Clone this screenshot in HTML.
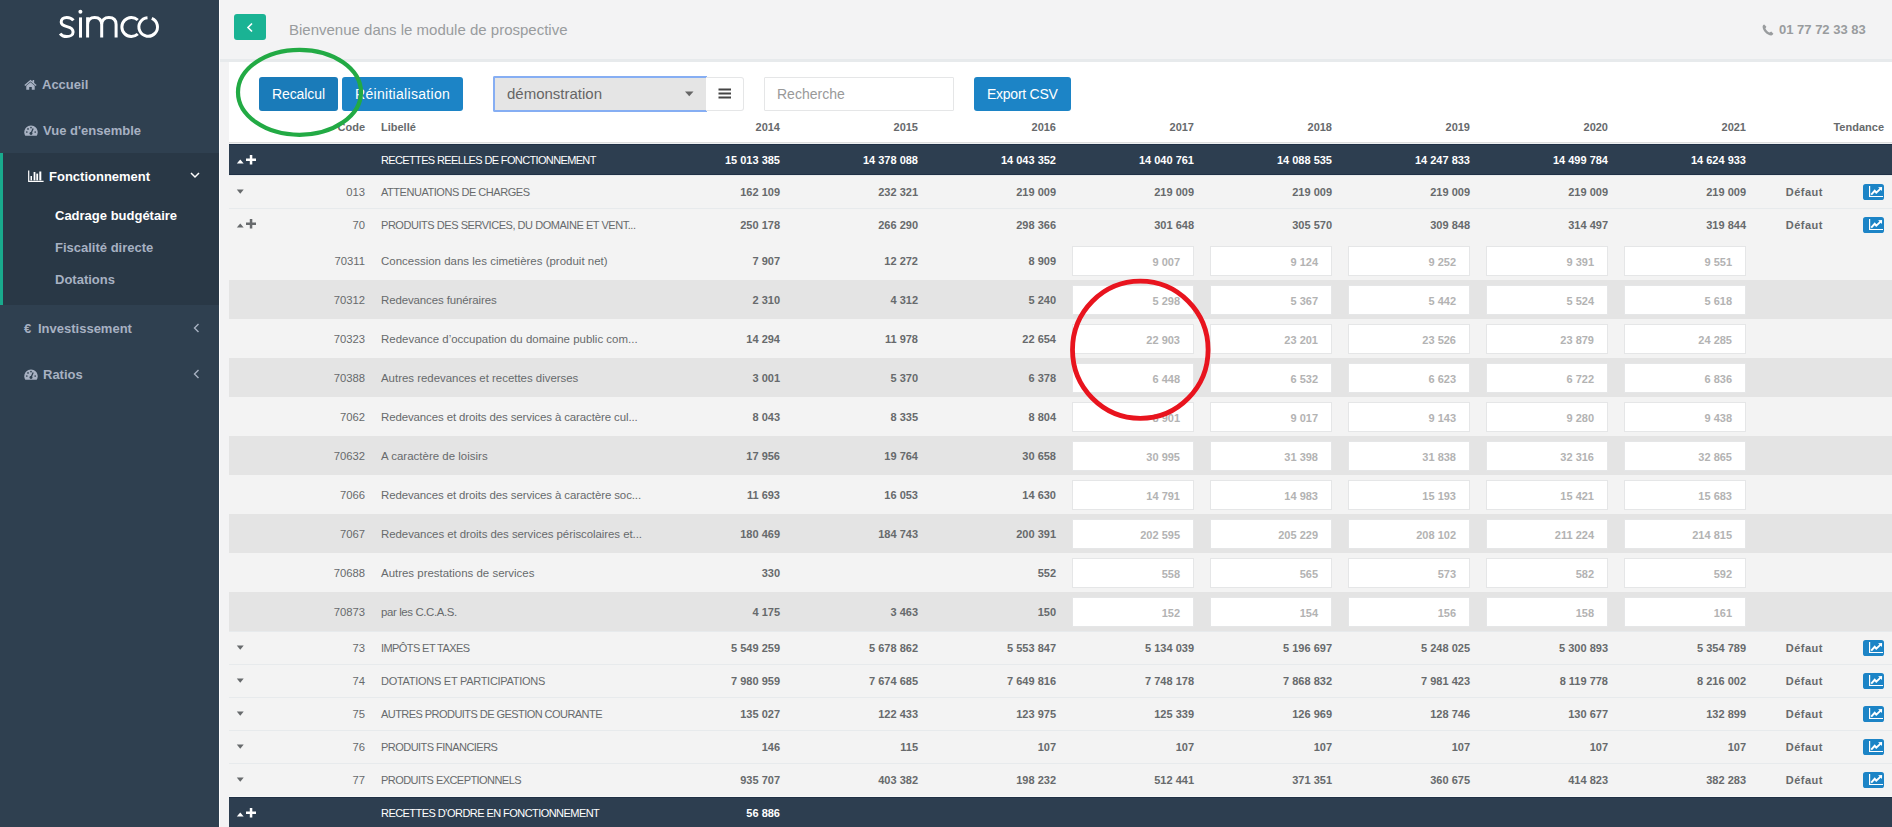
<!DOCTYPE html>
<html><head><meta charset="utf-8"><title>simco</title>
<style>
*{margin:0;padding:0;box-sizing:border-box}
html,body{width:1892px;height:827px;overflow:hidden;background:#f3f3f4;font-family:"Liberation Sans", sans-serif;}
.abs{position:absolute}
.t{position:absolute;white-space:nowrap;line-height:1}
.row{position:absolute;left:229px;width:1663px}
.inp{position:absolute;width:122px;background:#fff;border:1px solid #e5e6e7;}
</style></head><body>

<div class="abs" style="left:0;top:0;width:219px;height:827px;background:#2f4050"></div>
<div class="abs" style="left:219px;top:0;width:1px;height:827px;background:#ffffff"></div>
<div class="abs" style="left:0;top:153px;width:219px;height:152px;background:#293846"></div>
<div class="abs" style="left:0;top:153px;width:3px;height:152px;background:#19aa8d"></div>
<svg class="abs" style="left:0;top:0" width="219" height="50" viewBox="0 0 219 50">
<g stroke="#fff" stroke-width="3" fill="none" stroke-linecap="butt">
<path d="M73.4,20.4 C71.8,18.3 69.2,17.4 66.7,17.4 C63.3,17.4 61.2,19.2 61.2,21.9 C61.2,25 64,25.8 67,26.6 C70.6,27.5 73.1,28.7 73.1,31.9 C73.1,34.9 70.2,36.6 66.6,36.6 C63.6,36.6 61.5,35.5 60.1,33.6"/>
<path d="M80.5,17.4 V37.6"/>
<path d="M87.6,37.6 V17.2 M87.6,24.5 C87.6,19.8 90.5,17.4 94.6,17.4 C99,17.4 101.7,20 101.7,24.5 V37.6 M101.7,24.5 C101.7,20 104.6,17.4 108.9,17.4 C113.4,17.4 116.1,20 116.1,24.5 V37.6"/>
<path d="M137.8,20 A9.5,9.5 0 1 0 137.8,34"/>
<path d="M151.8,18.4 A9.3,9.3 0 1 1 147.5,17.7"/>
</g>
<circle cx="80.4" cy="11.8" r="2" fill="#fff"/>
</svg>
<svg class="abs" style="left:23.5px;top:79px" width="13" height="11" viewBox="0 0 14 12">
<path d="M7 0.8 L0.3 6.6 L1.3 7.6 L7 2.8 L12.7 7.6 L13.7 6.6 L11 4.3 V1 H9.3 V2.8 Z" fill="#a7b1c2"/>
<path d="M2.4 7.4 L7 3.6 L11.6 7.4 V11.6 H8.4 V8.6 H5.6 V11.6 H2.4 Z" fill="#a7b1c2"/>
</svg>
<div class="t" style="left:42px;top:78px;font-size:13px;color:#a7b1c2;font-weight:bold;">Accueil</div>
<svg class="abs" style="left:23.5px;top:125px" width="14" height="11.2" viewBox="0 0 15 12">
<path d="M7.5 0.5 C3.4 0.5 0.3 3.7 0.3 7.8 C0.3 9.3 0.7 10.5 1.4 11.5 H13.6 C14.3 10.5 14.7 9.3 14.7 7.8 C14.7 3.7 11.6 0.5 7.5 0.5 Z" fill="#a7b1c2"/>
<circle cx="7.5" cy="9" r="1.6" fill="#2f4050"/>
<path d="M7.5 9 L9.8 3.8" stroke="#2f4050" stroke-width="1.4"/>
<circle cx="3" cy="7.5" r="0.9" fill="#2f4050"/><circle cx="4.3" cy="4.2" r="0.9" fill="#2f4050"/><circle cx="7.5" cy="2.8" r="0.9" fill="#2f4050"/><circle cx="12" cy="7.5" r="0.9" fill="#2f4050"/>
</svg>
<div class="t" style="left:43px;top:124px;font-size:13px;color:#a7b1c2;font-weight:bold;">Vue d'ensemble</div>
<svg class="abs" style="left:27px;top:170px" width="17" height="13" viewBox="0 0 17 13">
<path d="M1.7 0.5 V11.4 H16.6" stroke="#fff" stroke-width="1.2" fill="none"/>
<rect x="3.5" y="6" width="1.5" height="4.4" fill="#fff"/><rect x="6.6" y="2" width="1.8" height="8.4" fill="#fff"/><rect x="9.3" y="3.6" width="1.8" height="6.8" fill="#fff"/><rect x="12.3" y="1.5" width="2" height="8.9" fill="#fff"/>
</svg>
<div class="t" style="left:49px;top:170px;font-size:13px;color:#fff;font-weight:bold;">Fonctionnement</div>
<svg class="abs" style="left:190px;top:172px" width="10" height="7"><path d="M1 1 L5 5 L9 1" stroke="#fff" stroke-width="1.5" fill="none"/></svg>
<div class="t" style="left:55px;top:209px;font-size:13px;color:#fff;font-weight:bold;">Cadrage budgétaire</div>
<div class="t" style="left:55px;top:241px;font-size:13px;color:#a7b1c2;font-weight:bold;">Fiscalité directe</div>
<div class="t" style="left:55px;top:273px;font-size:13px;color:#a7b1c2;font-weight:bold;">Dotations</div>
<div class="t" style="left:24px;top:322px;font-size:13px;color:#a7b1c2;font-weight:bold;">€</div>
<div class="t" style="left:38px;top:322px;font-size:13px;color:#a7b1c2;font-weight:bold;">Investissement</div>
<svg class="abs" style="left:193px;top:323px" width="7" height="10"><path d="M5.5 1 L1.5 5 L5.5 9" stroke="#a7b1c2" stroke-width="1.4" fill="none"/></svg>
<svg class="abs" style="left:23.5px;top:369px" width="14" height="11.2" viewBox="0 0 15 12">
<path d="M7.5 0.5 C3.4 0.5 0.3 3.7 0.3 7.8 C0.3 9.3 0.7 10.5 1.4 11.5 H13.6 C14.3 10.5 14.7 9.3 14.7 7.8 C14.7 3.7 11.6 0.5 7.5 0.5 Z" fill="#a7b1c2"/>
<circle cx="7.5" cy="9" r="1.6" fill="#2f4050"/>
<path d="M7.5 9 L9.8 3.8" stroke="#2f4050" stroke-width="1.4"/>
<circle cx="3" cy="7.5" r="0.9" fill="#2f4050"/><circle cx="4.3" cy="4.2" r="0.9" fill="#2f4050"/><circle cx="7.5" cy="2.8" r="0.9" fill="#2f4050"/><circle cx="12" cy="7.5" r="0.9" fill="#2f4050"/>
</svg>
<div class="t" style="left:43px;top:368px;font-size:13px;color:#a7b1c2;font-weight:bold;">Ratios</div>
<svg class="abs" style="left:193px;top:369px" width="7" height="10"><path d="M5.5 1 L1.5 5 L5.5 9" stroke="#a7b1c2" stroke-width="1.4" fill="none"/></svg>
<div class="abs" style="left:220px;top:59px;width:1672px;height:3px;background:#e7eaec"></div>
<div class="abs" style="left:234px;top:14px;width:32px;height:26px;background:#1ab394;border-radius:3px"></div>
<svg class="abs" style="left:246px;top:22px" width="8" height="11"><path d="M6 1.5 L2 5.5 L6 9.5" stroke="#fff" stroke-width="1.6" fill="none"/></svg>
<div class="t" style="left:289px;top:22px;font-size:15px;color:#999c9e;font-weight:normal;">Bienvenue dans le module de prospective</div>
<svg class="abs" style="left:1761.5px;top:23.5px" width="12" height="12" viewBox="0 0 12 12">
<path d="M2.2 0.6 C1.4 0.9 0.6 1.7 0.6 2.8 C0.6 6.8 5.2 11.4 9.2 11.4 C10.3 11.4 11.1 10.6 11.4 9.8 L9.2 7.6 L7.6 8.6 C6 7.8 4.2 6 3.4 4.4 L4.4 2.8 Z" fill="#999c9e"/>
</svg>
<div class="t" style="left:1779px;top:23px;font-size:13px;color:#999c9e;font-weight:bold;">01 77 72 33 83</div>
<div class="abs" style="left:229px;top:62px;width:1663px;height:80px;background:#fff"></div>
<div class="abs" style="left:229px;top:142px;width:1663px;height:1px;background:#dddddd"></div>
<div class="abs" style="left:229px;top:143px;width:1663px;height:1px;background:#eef0f2"></div>
<div class="abs" style="left:259px;top:77px;width:79px;height:34px;background:#1a7bb9;border-radius:3px"></div>
<div class="t" style="left:272px;top:87px;font-size:14px;color:#fff;font-weight:normal;letter-spacing:-0.1px;">Recalcul</div>
<div class="abs" style="left:342px;top:77px;width:121px;height:34px;background:#1c84c6;border-radius:3px"></div>
<div class="t" style="left:355px;top:87px;font-size:14px;color:#fff;font-weight:normal;letter-spacing:0.3px;">Réinitialisation</div>
<div class="abs" style="left:493px;top:76px;width:214px;height:36px;background:#e5e5e5;border:2px solid #86aef3;border-right:none;border-radius:2px 0 0 2px"></div>
<div class="t" style="left:507px;top:86px;font-size:15px;color:#666;font-weight:normal;">démonstration</div>
<svg class="abs" style="left:685px;top:91px" width="9" height="6"><path d="M0 0.5 H8.5 L4.25 5.2 Z" fill="#666"/></svg>
<div class="abs" style="left:706px;top:77px;width:38px;height:34px;background:#fff;border:1px solid #e5e6e7;border-left:none;border-radius:0 3px 3px 0"></div>
<svg class="abs" style="left:718px;top:88px" width="14" height="12"><rect x="0.5" y="0.5" width="12.5" height="2" fill="#444"/><rect x="0.5" y="4.5" width="12.5" height="2" fill="#444"/><rect x="0.5" y="8.5" width="12.5" height="2" fill="#444"/></svg>
<div class="abs" style="left:764px;top:77px;width:190px;height:34px;background:#fff;border:1px solid #e5e6e7;border-radius:1px"></div>
<div class="t" style="left:777px;top:87px;font-size:14px;color:#999;font-weight:normal;">Recherche</div>
<div class="abs" style="left:974px;top:77px;width:97px;height:34px;background:#1c84c6;border-radius:3px"></div>
<div class="t" style="left:987px;top:87px;font-size:14px;color:#fff;font-weight:normal;letter-spacing:-0.25px;">Export CSV</div>
<div class="t" style="right:1527px;top:122px;font-size:11px;color:#676a6c;font-weight:bold;text-align:right;">Code</div>
<div class="t" style="left:381px;top:122px;font-size:11px;color:#676a6c;font-weight:bold;">Libellé</div>
<div class="t" style="right:1112px;top:122px;font-size:11px;color:#676a6c;font-weight:bold;text-align:right;">2014</div>
<div class="t" style="right:974px;top:122px;font-size:11px;color:#676a6c;font-weight:bold;text-align:right;">2015</div>
<div class="t" style="right:836px;top:122px;font-size:11px;color:#676a6c;font-weight:bold;text-align:right;">2016</div>
<div class="t" style="right:698px;top:122px;font-size:11px;color:#676a6c;font-weight:bold;text-align:right;">2017</div>
<div class="t" style="right:560px;top:122px;font-size:11px;color:#676a6c;font-weight:bold;text-align:right;">2018</div>
<div class="t" style="right:422px;top:122px;font-size:11px;color:#676a6c;font-weight:bold;text-align:right;">2019</div>
<div class="t" style="right:284px;top:122px;font-size:11px;color:#676a6c;font-weight:bold;text-align:right;">2020</div>
<div class="t" style="right:146px;top:122px;font-size:11px;color:#676a6c;font-weight:bold;text-align:right;">2021</div>
<div class="t" style="right:8px;top:122px;font-size:11px;color:#676a6c;font-weight:bold;text-align:right;">Tendance</div>
<div class="row" style="top:144px;height:31px;background:#2d3e50;border-top:1px solid #1f3045;border-bottom:1px solid #1f3045"></div>
<svg style="position:absolute;left:236px;top:159px" width="9" height="6"><path d="M0.8 4.6 L7.7 4.6 L4.25 0.4 Z" fill="#fff"/></svg>
<svg style="position:absolute;left:246px;top:155px" width="11" height="11"><path d="M3.8 0 H6.3 V3.5 H10 V6 H6.3 V9.5 H3.8 V6 H0 V3.5 H3.8 Z" fill="#fff"/></svg>
<div class="t" style="left:381px;top:155px;font-size:11px;color:#fff;font-weight:normal;letter-spacing:-0.640909090909091px;">RECETTES REELLES DE FONCTIONNEMENT</div>
<div class="t" style="right:1112px;top:155px;font-size:11px;color:#fff;font-weight:bold;text-align:right;">15 013 385</div>
<div class="t" style="right:974px;top:155px;font-size:11px;color:#fff;font-weight:bold;text-align:right;">14 378 088</div>
<div class="t" style="right:836px;top:155px;font-size:11px;color:#fff;font-weight:bold;text-align:right;">14 043 352</div>
<div class="t" style="right:698px;top:155px;font-size:11px;color:#fff;font-weight:bold;text-align:right;">14 040 761</div>
<div class="t" style="right:560px;top:155px;font-size:11px;color:#fff;font-weight:bold;text-align:right;">14 088 535</div>
<div class="t" style="right:422px;top:155px;font-size:11px;color:#fff;font-weight:bold;text-align:right;">14 247 833</div>
<div class="t" style="right:284px;top:155px;font-size:11px;color:#fff;font-weight:bold;text-align:right;">14 499 784</div>
<div class="t" style="right:146px;top:155px;font-size:11px;color:#fff;font-weight:bold;text-align:right;">14 624 933</div>
<div class="row" style="top:175px;height:33px;background:#f3f3f3;border-top:1px solid #e7eaec"></div>
<svg style="position:absolute;left:236px;top:189px" width="9" height="6"><path d="M0.8 0.6 L7.7 0.6 L4.25 4.8 Z" fill="#676a6c"/></svg>
<div class="t" style="right:1527px;top:187px;font-size:11.25px;color:#676a6c;font-weight:normal;text-align:right;">013</div>
<div class="t" style="left:381px;top:187px;font-size:11px;color:#676a6c;font-weight:normal;letter-spacing:-0.4590909090909091px;">ATTENUATIONS DE CHARGES</div>
<div class="t" style="right:1112px;top:187px;font-size:11px;color:#676a6c;font-weight:bold;text-align:right;">162 109</div>
<div class="t" style="right:974px;top:187px;font-size:11px;color:#676a6c;font-weight:bold;text-align:right;">232 321</div>
<div class="t" style="right:836px;top:187px;font-size:11px;color:#676a6c;font-weight:bold;text-align:right;">219 009</div>
<div class="t" style="right:698px;top:187px;font-size:11px;color:#676a6c;font-weight:bold;text-align:right;">219 009</div>
<div class="t" style="right:560px;top:187px;font-size:11px;color:#676a6c;font-weight:bold;text-align:right;">219 009</div>
<div class="t" style="right:422px;top:187px;font-size:11px;color:#676a6c;font-weight:bold;text-align:right;">219 009</div>
<div class="t" style="right:284px;top:187px;font-size:11px;color:#676a6c;font-weight:bold;text-align:right;">219 009</div>
<div class="t" style="right:146px;top:187px;font-size:11px;color:#676a6c;font-weight:bold;text-align:right;">219 009</div>
<div class="t" style="right:69px;top:187px;font-size:11px;color:#676a6c;font-weight:bold;text-align:right;letter-spacing:0.5px;">Défaut</div>
<svg style="position:absolute;left:1863px;top:184px" width="21" height="16"><rect x="0" y="0" width="21" height="16" rx="2.6" fill="#1c84c6"/><path d="M6.6 2 V12.5 H20" stroke="#fff" stroke-width="1.2" fill="none"/><path d="M8.2 10.6 L11.7 6.8 L13.3 8.7 L17.6 4.6" stroke="#fff" stroke-width="1.9" fill="none"/><path d="M15.1 3.2 L19.1 2.9 L19.0 6.9 Z" fill="#fff"/></svg>
<div class="row" style="top:208px;height:33px;background:#f3f3f3;border-top:1px solid #e7eaec"></div>
<svg style="position:absolute;left:236px;top:223px" width="9" height="6"><path d="M0.8 4.6 L7.7 4.6 L4.25 0.4 Z" fill="#676a6c"/></svg>
<svg style="position:absolute;left:246px;top:219px" width="11" height="11"><path d="M3.8 0 H6.3 V3.5 H10 V6 H6.3 V9.5 H3.8 V6 H0 V3.5 H3.8 Z" fill="#676a6c"/></svg>
<div class="t" style="right:1527px;top:220px;font-size:11.25px;color:#676a6c;font-weight:normal;text-align:right;">70</div>
<div class="t" style="left:381px;top:220px;font-size:11px;color:#676a6c;font-weight:normal;letter-spacing:-0.45697674418604656px;">PRODUITS DES SERVICES, DU DOMAINE ET VENT...</div>
<div class="t" style="right:1112px;top:220px;font-size:11px;color:#676a6c;font-weight:bold;text-align:right;">250 178</div>
<div class="t" style="right:974px;top:220px;font-size:11px;color:#676a6c;font-weight:bold;text-align:right;">266 290</div>
<div class="t" style="right:836px;top:220px;font-size:11px;color:#676a6c;font-weight:bold;text-align:right;">298 366</div>
<div class="t" style="right:698px;top:220px;font-size:11px;color:#676a6c;font-weight:bold;text-align:right;">301 648</div>
<div class="t" style="right:560px;top:220px;font-size:11px;color:#676a6c;font-weight:bold;text-align:right;">305 570</div>
<div class="t" style="right:422px;top:220px;font-size:11px;color:#676a6c;font-weight:bold;text-align:right;">309 848</div>
<div class="t" style="right:284px;top:220px;font-size:11px;color:#676a6c;font-weight:bold;text-align:right;">314 497</div>
<div class="t" style="right:146px;top:220px;font-size:11px;color:#676a6c;font-weight:bold;text-align:right;">319 844</div>
<div class="t" style="right:69px;top:220px;font-size:11px;color:#676a6c;font-weight:bold;text-align:right;letter-spacing:0.5px;">Défaut</div>
<svg style="position:absolute;left:1863px;top:217px" width="21" height="16"><rect x="0" y="0" width="21" height="16" rx="2.6" fill="#1c84c6"/><path d="M6.6 2 V12.5 H20" stroke="#fff" stroke-width="1.2" fill="none"/><path d="M8.2 10.6 L11.7 6.8 L13.3 8.7 L17.6 4.6" stroke="#fff" stroke-width="1.9" fill="none"/><path d="M15.1 3.2 L19.1 2.9 L19.0 6.9 Z" fill="#fff"/></svg>
<div class="row" style="top:241px;height:39px;background:#f3f3f3"></div>
<div class="t" style="right:1527px;top:256px;font-size:11.25px;color:#676a6c;font-weight:normal;text-align:right;">70311</div>
<div class="t" style="left:381px;top:256px;font-size:11.45px;color:#676a6c;font-weight:normal;letter-spacing:0.02093023255813636px;">Concession dans les cimetières (produit net)</div>
<div class="t" style="right:1112px;top:256px;font-size:11px;color:#676a6c;font-weight:bold;text-align:right;">7 907</div>
<div class="t" style="right:974px;top:256px;font-size:11px;color:#676a6c;font-weight:bold;text-align:right;">12 272</div>
<div class="t" style="right:836px;top:256px;font-size:11px;color:#676a6c;font-weight:bold;text-align:right;">8 909</div>
<div class="inp" style="left:1072px;top:246px;height:30px"></div>
<div class="t" style="right:712px;top:257px;font-size:11px;color:#b3b3b3;font-weight:bold;text-align:right;">9 007</div>
<div class="inp" style="left:1210px;top:246px;height:30px"></div>
<div class="t" style="right:574px;top:257px;font-size:11px;color:#b3b3b3;font-weight:bold;text-align:right;">9 124</div>
<div class="inp" style="left:1348px;top:246px;height:30px"></div>
<div class="t" style="right:436px;top:257px;font-size:11px;color:#b3b3b3;font-weight:bold;text-align:right;">9 252</div>
<div class="inp" style="left:1486px;top:246px;height:30px"></div>
<div class="t" style="right:298px;top:257px;font-size:11px;color:#b3b3b3;font-weight:bold;text-align:right;">9 391</div>
<div class="inp" style="left:1624px;top:246px;height:30px"></div>
<div class="t" style="right:160px;top:257px;font-size:11px;color:#b3b3b3;font-weight:bold;text-align:right;">9 551</div>
<div class="row" style="top:280px;height:39px;background:#e4e4e4"></div>
<div class="t" style="right:1527px;top:295px;font-size:11.25px;color:#676a6c;font-weight:normal;text-align:right;">70312</div>
<div class="t" style="left:381px;top:295px;font-size:11.45px;color:#676a6c;font-weight:normal;letter-spacing:-0.1px;">Redevances funéraires</div>
<div class="t" style="right:1112px;top:295px;font-size:11px;color:#676a6c;font-weight:bold;text-align:right;">2 310</div>
<div class="t" style="right:974px;top:295px;font-size:11px;color:#676a6c;font-weight:bold;text-align:right;">4 312</div>
<div class="t" style="right:836px;top:295px;font-size:11px;color:#676a6c;font-weight:bold;text-align:right;">5 240</div>
<div class="inp" style="left:1072px;top:285px;height:30px"></div>
<div class="t" style="right:712px;top:296px;font-size:11px;color:#b3b3b3;font-weight:bold;text-align:right;">5 298</div>
<div class="inp" style="left:1210px;top:285px;height:30px"></div>
<div class="t" style="right:574px;top:296px;font-size:11px;color:#b3b3b3;font-weight:bold;text-align:right;">5 367</div>
<div class="inp" style="left:1348px;top:285px;height:30px"></div>
<div class="t" style="right:436px;top:296px;font-size:11px;color:#b3b3b3;font-weight:bold;text-align:right;">5 442</div>
<div class="inp" style="left:1486px;top:285px;height:30px"></div>
<div class="t" style="right:298px;top:296px;font-size:11px;color:#b3b3b3;font-weight:bold;text-align:right;">5 524</div>
<div class="inp" style="left:1624px;top:285px;height:30px"></div>
<div class="t" style="right:160px;top:296px;font-size:11px;color:#b3b3b3;font-weight:bold;text-align:right;">5 618</div>
<div class="row" style="top:319px;height:39px;background:#f3f3f3"></div>
<div class="t" style="right:1527px;top:334px;font-size:11.25px;color:#676a6c;font-weight:normal;text-align:right;">70323</div>
<div class="t" style="left:381px;top:334px;font-size:11.45px;color:#676a6c;font-weight:normal;letter-spacing:0.021739130434782608px;">Redevance d’occupation du domaine public com...</div>
<div class="t" style="right:1112px;top:334px;font-size:11px;color:#676a6c;font-weight:bold;text-align:right;">14 294</div>
<div class="t" style="right:974px;top:334px;font-size:11px;color:#676a6c;font-weight:bold;text-align:right;">11 978</div>
<div class="t" style="right:836px;top:334px;font-size:11px;color:#676a6c;font-weight:bold;text-align:right;">22 654</div>
<div class="inp" style="left:1072px;top:324px;height:30px"></div>
<div class="t" style="right:712px;top:335px;font-size:11px;color:#b3b3b3;font-weight:bold;text-align:right;">22 903</div>
<div class="inp" style="left:1210px;top:324px;height:30px"></div>
<div class="t" style="right:574px;top:335px;font-size:11px;color:#b3b3b3;font-weight:bold;text-align:right;">23 201</div>
<div class="inp" style="left:1348px;top:324px;height:30px"></div>
<div class="t" style="right:436px;top:335px;font-size:11px;color:#b3b3b3;font-weight:bold;text-align:right;">23 526</div>
<div class="inp" style="left:1486px;top:324px;height:30px"></div>
<div class="t" style="right:298px;top:335px;font-size:11px;color:#b3b3b3;font-weight:bold;text-align:right;">23 879</div>
<div class="inp" style="left:1624px;top:324px;height:30px"></div>
<div class="t" style="right:160px;top:335px;font-size:11px;color:#b3b3b3;font-weight:bold;text-align:right;">24 285</div>
<div class="row" style="top:358px;height:39px;background:#e4e4e4"></div>
<div class="t" style="right:1527px;top:373px;font-size:11.25px;color:#676a6c;font-weight:normal;text-align:right;">70388</div>
<div class="t" style="left:381px;top:373px;font-size:11.45px;color:#676a6c;font-weight:normal;letter-spacing:-0.010810810810807123px;">Autres redevances et recettes diverses</div>
<div class="t" style="right:1112px;top:373px;font-size:11px;color:#676a6c;font-weight:bold;text-align:right;">3 001</div>
<div class="t" style="right:974px;top:373px;font-size:11px;color:#676a6c;font-weight:bold;text-align:right;">5 370</div>
<div class="t" style="right:836px;top:373px;font-size:11px;color:#676a6c;font-weight:bold;text-align:right;">6 378</div>
<div class="inp" style="left:1072px;top:363px;height:30px"></div>
<div class="t" style="right:712px;top:374px;font-size:11px;color:#b3b3b3;font-weight:bold;text-align:right;">6 448</div>
<div class="inp" style="left:1210px;top:363px;height:30px"></div>
<div class="t" style="right:574px;top:374px;font-size:11px;color:#b3b3b3;font-weight:bold;text-align:right;">6 532</div>
<div class="inp" style="left:1348px;top:363px;height:30px"></div>
<div class="t" style="right:436px;top:374px;font-size:11px;color:#b3b3b3;font-weight:bold;text-align:right;">6 623</div>
<div class="inp" style="left:1486px;top:363px;height:30px"></div>
<div class="t" style="right:298px;top:374px;font-size:11px;color:#b3b3b3;font-weight:bold;text-align:right;">6 722</div>
<div class="inp" style="left:1624px;top:363px;height:30px"></div>
<div class="t" style="right:160px;top:374px;font-size:11px;color:#b3b3b3;font-weight:bold;text-align:right;">6 836</div>
<div class="row" style="top:397px;height:39px;background:#f3f3f3"></div>
<div class="t" style="right:1527px;top:412px;font-size:11.25px;color:#676a6c;font-weight:normal;text-align:right;">7062</div>
<div class="t" style="left:381px;top:412px;font-size:11.45px;color:#676a6c;font-weight:normal;letter-spacing:-0.10196078431372416px;">Redevances et droits des services à caractère cul...</div>
<div class="t" style="right:1112px;top:412px;font-size:11px;color:#676a6c;font-weight:bold;text-align:right;">8 043</div>
<div class="t" style="right:974px;top:412px;font-size:11px;color:#676a6c;font-weight:bold;text-align:right;">8 335</div>
<div class="t" style="right:836px;top:412px;font-size:11px;color:#676a6c;font-weight:bold;text-align:right;">8 804</div>
<div class="inp" style="left:1072px;top:402px;height:30px"></div>
<div class="t" style="right:712px;top:413px;font-size:11px;color:#b3b3b3;font-weight:bold;text-align:right;">8 901</div>
<div class="inp" style="left:1210px;top:402px;height:30px"></div>
<div class="t" style="right:574px;top:413px;font-size:11px;color:#b3b3b3;font-weight:bold;text-align:right;">9 017</div>
<div class="inp" style="left:1348px;top:402px;height:30px"></div>
<div class="t" style="right:436px;top:413px;font-size:11px;color:#b3b3b3;font-weight:bold;text-align:right;">9 143</div>
<div class="inp" style="left:1486px;top:402px;height:30px"></div>
<div class="t" style="right:298px;top:413px;font-size:11px;color:#b3b3b3;font-weight:bold;text-align:right;">9 280</div>
<div class="inp" style="left:1624px;top:402px;height:30px"></div>
<div class="t" style="right:160px;top:413px;font-size:11px;color:#b3b3b3;font-weight:bold;text-align:right;">9 438</div>
<div class="row" style="top:436px;height:39px;background:#e4e4e4"></div>
<div class="t" style="right:1527px;top:451px;font-size:11.25px;color:#676a6c;font-weight:normal;text-align:right;">70632</div>
<div class="t" style="left:381px;top:451px;font-size:11.45px;color:#676a6c;font-weight:normal;letter-spacing:0.023809523809523808px;">A caractère de loisirs</div>
<div class="t" style="right:1112px;top:451px;font-size:11px;color:#676a6c;font-weight:bold;text-align:right;">17 956</div>
<div class="t" style="right:974px;top:451px;font-size:11px;color:#676a6c;font-weight:bold;text-align:right;">19 764</div>
<div class="t" style="right:836px;top:451px;font-size:11px;color:#676a6c;font-weight:bold;text-align:right;">30 658</div>
<div class="inp" style="left:1072px;top:441px;height:30px"></div>
<div class="t" style="right:712px;top:452px;font-size:11px;color:#b3b3b3;font-weight:bold;text-align:right;">30 995</div>
<div class="inp" style="left:1210px;top:441px;height:30px"></div>
<div class="t" style="right:574px;top:452px;font-size:11px;color:#b3b3b3;font-weight:bold;text-align:right;">31 398</div>
<div class="inp" style="left:1348px;top:441px;height:30px"></div>
<div class="t" style="right:436px;top:452px;font-size:11px;color:#b3b3b3;font-weight:bold;text-align:right;">31 838</div>
<div class="inp" style="left:1486px;top:441px;height:30px"></div>
<div class="t" style="right:298px;top:452px;font-size:11px;color:#b3b3b3;font-weight:bold;text-align:right;">32 316</div>
<div class="inp" style="left:1624px;top:441px;height:30px"></div>
<div class="t" style="right:160px;top:452px;font-size:11px;color:#b3b3b3;font-weight:bold;text-align:right;">32 865</div>
<div class="row" style="top:475px;height:39px;background:#f3f3f3"></div>
<div class="t" style="right:1527px;top:490px;font-size:11.25px;color:#676a6c;font-weight:normal;text-align:right;">7066</div>
<div class="t" style="left:381px;top:490px;font-size:11.45px;color:#676a6c;font-weight:normal;letter-spacing:-0.09803921568627451px;">Redevances et droits des services à caractère soc...</div>
<div class="t" style="right:1112px;top:490px;font-size:11px;color:#676a6c;font-weight:bold;text-align:right;">11 693</div>
<div class="t" style="right:974px;top:490px;font-size:11px;color:#676a6c;font-weight:bold;text-align:right;">16 053</div>
<div class="t" style="right:836px;top:490px;font-size:11px;color:#676a6c;font-weight:bold;text-align:right;">14 630</div>
<div class="inp" style="left:1072px;top:480px;height:30px"></div>
<div class="t" style="right:712px;top:491px;font-size:11px;color:#b3b3b3;font-weight:bold;text-align:right;">14 791</div>
<div class="inp" style="left:1210px;top:480px;height:30px"></div>
<div class="t" style="right:574px;top:491px;font-size:11px;color:#b3b3b3;font-weight:bold;text-align:right;">14 983</div>
<div class="inp" style="left:1348px;top:480px;height:30px"></div>
<div class="t" style="right:436px;top:491px;font-size:11px;color:#b3b3b3;font-weight:bold;text-align:right;">15 193</div>
<div class="inp" style="left:1486px;top:480px;height:30px"></div>
<div class="t" style="right:298px;top:491px;font-size:11px;color:#b3b3b3;font-weight:bold;text-align:right;">15 421</div>
<div class="inp" style="left:1624px;top:480px;height:30px"></div>
<div class="t" style="right:160px;top:491px;font-size:11px;color:#b3b3b3;font-weight:bold;text-align:right;">15 683</div>
<div class="row" style="top:514px;height:39px;background:#e4e4e4"></div>
<div class="t" style="right:1527px;top:529px;font-size:11.25px;color:#676a6c;font-weight:normal;text-align:right;">7067</div>
<div class="t" style="left:381px;top:529px;font-size:11.45px;color:#676a6c;font-weight:normal;letter-spacing:-0.05384615384615516px;">Redevances et droits des services périscolaires et...</div>
<div class="t" style="right:1112px;top:529px;font-size:11px;color:#676a6c;font-weight:bold;text-align:right;">180 469</div>
<div class="t" style="right:974px;top:529px;font-size:11px;color:#676a6c;font-weight:bold;text-align:right;">184 743</div>
<div class="t" style="right:836px;top:529px;font-size:11px;color:#676a6c;font-weight:bold;text-align:right;">200 391</div>
<div class="inp" style="left:1072px;top:519px;height:30px"></div>
<div class="t" style="right:712px;top:530px;font-size:11px;color:#b3b3b3;font-weight:bold;text-align:right;">202 595</div>
<div class="inp" style="left:1210px;top:519px;height:30px"></div>
<div class="t" style="right:574px;top:530px;font-size:11px;color:#b3b3b3;font-weight:bold;text-align:right;">205 229</div>
<div class="inp" style="left:1348px;top:519px;height:30px"></div>
<div class="t" style="right:436px;top:530px;font-size:11px;color:#b3b3b3;font-weight:bold;text-align:right;">208 102</div>
<div class="inp" style="left:1486px;top:519px;height:30px"></div>
<div class="t" style="right:298px;top:530px;font-size:11px;color:#b3b3b3;font-weight:bold;text-align:right;">211 224</div>
<div class="inp" style="left:1624px;top:519px;height:30px"></div>
<div class="t" style="right:160px;top:530px;font-size:11px;color:#b3b3b3;font-weight:bold;text-align:right;">214 815</div>
<div class="row" style="top:553px;height:39px;background:#f3f3f3"></div>
<div class="t" style="right:1527px;top:568px;font-size:11.25px;color:#676a6c;font-weight:normal;text-align:right;">70688</div>
<div class="t" style="left:381px;top:568px;font-size:11.45px;color:#676a6c;font-weight:normal;letter-spacing:0.006896551724135579px;">Autres prestations de services</div>
<div class="t" style="right:1112px;top:568px;font-size:11px;color:#676a6c;font-weight:bold;text-align:right;">330</div>
<div class="t" style="right:836px;top:568px;font-size:11px;color:#676a6c;font-weight:bold;text-align:right;">552</div>
<div class="inp" style="left:1072px;top:558px;height:30px"></div>
<div class="t" style="right:712px;top:569px;font-size:11px;color:#b3b3b3;font-weight:bold;text-align:right;">558</div>
<div class="inp" style="left:1210px;top:558px;height:30px"></div>
<div class="t" style="right:574px;top:569px;font-size:11px;color:#b3b3b3;font-weight:bold;text-align:right;">565</div>
<div class="inp" style="left:1348px;top:558px;height:30px"></div>
<div class="t" style="right:436px;top:569px;font-size:11px;color:#b3b3b3;font-weight:bold;text-align:right;">573</div>
<div class="inp" style="left:1486px;top:558px;height:30px"></div>
<div class="t" style="right:298px;top:569px;font-size:11px;color:#b3b3b3;font-weight:bold;text-align:right;">582</div>
<div class="inp" style="left:1624px;top:558px;height:30px"></div>
<div class="t" style="right:160px;top:569px;font-size:11px;color:#b3b3b3;font-weight:bold;text-align:right;">592</div>
<div class="row" style="top:592px;height:39px;background:#e4e4e4"></div>
<div class="t" style="right:1527px;top:607px;font-size:11.25px;color:#676a6c;font-weight:normal;text-align:right;">70873</div>
<div class="t" style="left:381px;top:607px;font-size:11.45px;color:#676a6c;font-weight:normal;letter-spacing:-0.3866666666666712px;">par les C.C.A.S.</div>
<div class="t" style="right:1112px;top:607px;font-size:11px;color:#676a6c;font-weight:bold;text-align:right;">4 175</div>
<div class="t" style="right:974px;top:607px;font-size:11px;color:#676a6c;font-weight:bold;text-align:right;">3 463</div>
<div class="t" style="right:836px;top:607px;font-size:11px;color:#676a6c;font-weight:bold;text-align:right;">150</div>
<div class="inp" style="left:1072px;top:597px;height:30px"></div>
<div class="t" style="right:712px;top:608px;font-size:11px;color:#b3b3b3;font-weight:bold;text-align:right;">152</div>
<div class="inp" style="left:1210px;top:597px;height:30px"></div>
<div class="t" style="right:574px;top:608px;font-size:11px;color:#b3b3b3;font-weight:bold;text-align:right;">154</div>
<div class="inp" style="left:1348px;top:597px;height:30px"></div>
<div class="t" style="right:436px;top:608px;font-size:11px;color:#b3b3b3;font-weight:bold;text-align:right;">156</div>
<div class="inp" style="left:1486px;top:597px;height:30px"></div>
<div class="t" style="right:298px;top:608px;font-size:11px;color:#b3b3b3;font-weight:bold;text-align:right;">158</div>
<div class="inp" style="left:1624px;top:597px;height:30px"></div>
<div class="t" style="right:160px;top:608px;font-size:11px;color:#b3b3b3;font-weight:bold;text-align:right;">161</div>
<div class="row" style="top:631px;height:33px;background:#f3f3f3;border-top:1px solid #e7eaec"></div>
<svg style="position:absolute;left:236px;top:645px" width="9" height="6"><path d="M0.8 0.6 L7.7 0.6 L4.25 4.8 Z" fill="#676a6c"/></svg>
<div class="t" style="right:1527px;top:643px;font-size:11.25px;color:#676a6c;font-weight:normal;text-align:right;">73</div>
<div class="t" style="left:381px;top:643px;font-size:11px;color:#676a6c;font-weight:normal;letter-spacing:-0.5857142857142857px;">IMPÔTS ET TAXES</div>
<div class="t" style="right:1112px;top:643px;font-size:11px;color:#676a6c;font-weight:bold;text-align:right;">5 549 259</div>
<div class="t" style="right:974px;top:643px;font-size:11px;color:#676a6c;font-weight:bold;text-align:right;">5 678 862</div>
<div class="t" style="right:836px;top:643px;font-size:11px;color:#676a6c;font-weight:bold;text-align:right;">5 553 847</div>
<div class="t" style="right:698px;top:643px;font-size:11px;color:#676a6c;font-weight:bold;text-align:right;">5 134 039</div>
<div class="t" style="right:560px;top:643px;font-size:11px;color:#676a6c;font-weight:bold;text-align:right;">5 196 697</div>
<div class="t" style="right:422px;top:643px;font-size:11px;color:#676a6c;font-weight:bold;text-align:right;">5 248 025</div>
<div class="t" style="right:284px;top:643px;font-size:11px;color:#676a6c;font-weight:bold;text-align:right;">5 300 893</div>
<div class="t" style="right:146px;top:643px;font-size:11px;color:#676a6c;font-weight:bold;text-align:right;">5 354 789</div>
<div class="t" style="right:69px;top:643px;font-size:11px;color:#676a6c;font-weight:bold;text-align:right;letter-spacing:0.5px;">Défaut</div>
<svg style="position:absolute;left:1863px;top:640px" width="21" height="16"><rect x="0" y="0" width="21" height="16" rx="2.6" fill="#1c84c6"/><path d="M6.6 2 V12.5 H20" stroke="#fff" stroke-width="1.2" fill="none"/><path d="M8.2 10.6 L11.7 6.8 L13.3 8.7 L17.6 4.6" stroke="#fff" stroke-width="1.9" fill="none"/><path d="M15.1 3.2 L19.1 2.9 L19.0 6.9 Z" fill="#fff"/></svg>
<div class="row" style="top:664px;height:33px;background:#f3f3f3;border-top:1px solid #e7eaec"></div>
<svg style="position:absolute;left:236px;top:678px" width="9" height="6"><path d="M0.8 0.6 L7.7 0.6 L4.25 4.8 Z" fill="#676a6c"/></svg>
<div class="t" style="right:1527px;top:676px;font-size:11.25px;color:#676a6c;font-weight:normal;text-align:right;">74</div>
<div class="t" style="left:381px;top:676px;font-size:11px;color:#676a6c;font-weight:normal;letter-spacing:-0.2769230769230717px;">DOTATIONS ET PARTICIPATIONS</div>
<div class="t" style="right:1112px;top:676px;font-size:11px;color:#676a6c;font-weight:bold;text-align:right;">7 980 959</div>
<div class="t" style="right:974px;top:676px;font-size:11px;color:#676a6c;font-weight:bold;text-align:right;">7 674 685</div>
<div class="t" style="right:836px;top:676px;font-size:11px;color:#676a6c;font-weight:bold;text-align:right;">7 649 816</div>
<div class="t" style="right:698px;top:676px;font-size:11px;color:#676a6c;font-weight:bold;text-align:right;">7 748 178</div>
<div class="t" style="right:560px;top:676px;font-size:11px;color:#676a6c;font-weight:bold;text-align:right;">7 868 832</div>
<div class="t" style="right:422px;top:676px;font-size:11px;color:#676a6c;font-weight:bold;text-align:right;">7 981 423</div>
<div class="t" style="right:284px;top:676px;font-size:11px;color:#676a6c;font-weight:bold;text-align:right;">8 119 778</div>
<div class="t" style="right:146px;top:676px;font-size:11px;color:#676a6c;font-weight:bold;text-align:right;">8 216 002</div>
<div class="t" style="right:69px;top:676px;font-size:11px;color:#676a6c;font-weight:bold;text-align:right;letter-spacing:0.5px;">Défaut</div>
<svg style="position:absolute;left:1863px;top:673px" width="21" height="16"><rect x="0" y="0" width="21" height="16" rx="2.6" fill="#1c84c6"/><path d="M6.6 2 V12.5 H20" stroke="#fff" stroke-width="1.2" fill="none"/><path d="M8.2 10.6 L11.7 6.8 L13.3 8.7 L17.6 4.6" stroke="#fff" stroke-width="1.9" fill="none"/><path d="M15.1 3.2 L19.1 2.9 L19.0 6.9 Z" fill="#fff"/></svg>
<div class="row" style="top:697px;height:33px;background:#f3f3f3;border-top:1px solid #e7eaec"></div>
<svg style="position:absolute;left:236px;top:711px" width="9" height="6"><path d="M0.8 0.6 L7.7 0.6 L4.25 4.8 Z" fill="#676a6c"/></svg>
<div class="t" style="right:1527px;top:709px;font-size:11.25px;color:#676a6c;font-weight:normal;text-align:right;">75</div>
<div class="t" style="left:381px;top:709px;font-size:11px;color:#676a6c;font-weight:normal;letter-spacing:-0.55px;">AUTRES PRODUITS DE GESTION COURANTE</div>
<div class="t" style="right:1112px;top:709px;font-size:11px;color:#676a6c;font-weight:bold;text-align:right;">135 027</div>
<div class="t" style="right:974px;top:709px;font-size:11px;color:#676a6c;font-weight:bold;text-align:right;">122 433</div>
<div class="t" style="right:836px;top:709px;font-size:11px;color:#676a6c;font-weight:bold;text-align:right;">123 975</div>
<div class="t" style="right:698px;top:709px;font-size:11px;color:#676a6c;font-weight:bold;text-align:right;">125 339</div>
<div class="t" style="right:560px;top:709px;font-size:11px;color:#676a6c;font-weight:bold;text-align:right;">126 969</div>
<div class="t" style="right:422px;top:709px;font-size:11px;color:#676a6c;font-weight:bold;text-align:right;">128 746</div>
<div class="t" style="right:284px;top:709px;font-size:11px;color:#676a6c;font-weight:bold;text-align:right;">130 677</div>
<div class="t" style="right:146px;top:709px;font-size:11px;color:#676a6c;font-weight:bold;text-align:right;">132 899</div>
<div class="t" style="right:69px;top:709px;font-size:11px;color:#676a6c;font-weight:bold;text-align:right;letter-spacing:0.5px;">Défaut</div>
<svg style="position:absolute;left:1863px;top:706px" width="21" height="16"><rect x="0" y="0" width="21" height="16" rx="2.6" fill="#1c84c6"/><path d="M6.6 2 V12.5 H20" stroke="#fff" stroke-width="1.2" fill="none"/><path d="M8.2 10.6 L11.7 6.8 L13.3 8.7 L17.6 4.6" stroke="#fff" stroke-width="1.9" fill="none"/><path d="M15.1 3.2 L19.1 2.9 L19.0 6.9 Z" fill="#fff"/></svg>
<div class="row" style="top:730px;height:33px;background:#f3f3f3;border-top:1px solid #e7eaec"></div>
<svg style="position:absolute;left:236px;top:744px" width="9" height="6"><path d="M0.8 0.6 L7.7 0.6 L4.25 4.8 Z" fill="#676a6c"/></svg>
<div class="t" style="right:1527px;top:742px;font-size:11.25px;color:#676a6c;font-weight:normal;text-align:right;">76</div>
<div class="t" style="left:381px;top:742px;font-size:11px;color:#676a6c;font-weight:normal;letter-spacing:-0.5333333333333294px;">PRODUITS FINANCIERS</div>
<div class="t" style="right:1112px;top:742px;font-size:11px;color:#676a6c;font-weight:bold;text-align:right;">146</div>
<div class="t" style="right:974px;top:742px;font-size:11px;color:#676a6c;font-weight:bold;text-align:right;">115</div>
<div class="t" style="right:836px;top:742px;font-size:11px;color:#676a6c;font-weight:bold;text-align:right;">107</div>
<div class="t" style="right:698px;top:742px;font-size:11px;color:#676a6c;font-weight:bold;text-align:right;">107</div>
<div class="t" style="right:560px;top:742px;font-size:11px;color:#676a6c;font-weight:bold;text-align:right;">107</div>
<div class="t" style="right:422px;top:742px;font-size:11px;color:#676a6c;font-weight:bold;text-align:right;">107</div>
<div class="t" style="right:284px;top:742px;font-size:11px;color:#676a6c;font-weight:bold;text-align:right;">107</div>
<div class="t" style="right:146px;top:742px;font-size:11px;color:#676a6c;font-weight:bold;text-align:right;">107</div>
<div class="t" style="right:69px;top:742px;font-size:11px;color:#676a6c;font-weight:bold;text-align:right;letter-spacing:0.5px;">Défaut</div>
<svg style="position:absolute;left:1863px;top:739px" width="21" height="16"><rect x="0" y="0" width="21" height="16" rx="2.6" fill="#1c84c6"/><path d="M6.6 2 V12.5 H20" stroke="#fff" stroke-width="1.2" fill="none"/><path d="M8.2 10.6 L11.7 6.8 L13.3 8.7 L17.6 4.6" stroke="#fff" stroke-width="1.9" fill="none"/><path d="M15.1 3.2 L19.1 2.9 L19.0 6.9 Z" fill="#fff"/></svg>
<div class="row" style="top:763px;height:33px;background:#f3f3f3;border-top:1px solid #e7eaec"></div>
<svg style="position:absolute;left:236px;top:777px" width="9" height="6"><path d="M0.8 0.6 L7.7 0.6 L4.25 4.8 Z" fill="#676a6c"/></svg>
<div class="t" style="right:1527px;top:775px;font-size:11.25px;color:#676a6c;font-weight:normal;text-align:right;">77</div>
<div class="t" style="left:381px;top:775px;font-size:11px;color:#676a6c;font-weight:normal;letter-spacing:-0.5547619047619113px;">PRODUITS EXCEPTIONNELS</div>
<div class="t" style="right:1112px;top:775px;font-size:11px;color:#676a6c;font-weight:bold;text-align:right;">935 707</div>
<div class="t" style="right:974px;top:775px;font-size:11px;color:#676a6c;font-weight:bold;text-align:right;">403 382</div>
<div class="t" style="right:836px;top:775px;font-size:11px;color:#676a6c;font-weight:bold;text-align:right;">198 232</div>
<div class="t" style="right:698px;top:775px;font-size:11px;color:#676a6c;font-weight:bold;text-align:right;">512 441</div>
<div class="t" style="right:560px;top:775px;font-size:11px;color:#676a6c;font-weight:bold;text-align:right;">371 351</div>
<div class="t" style="right:422px;top:775px;font-size:11px;color:#676a6c;font-weight:bold;text-align:right;">360 675</div>
<div class="t" style="right:284px;top:775px;font-size:11px;color:#676a6c;font-weight:bold;text-align:right;">414 823</div>
<div class="t" style="right:146px;top:775px;font-size:11px;color:#676a6c;font-weight:bold;text-align:right;">382 283</div>
<div class="t" style="right:69px;top:775px;font-size:11px;color:#676a6c;font-weight:bold;text-align:right;letter-spacing:0.5px;">Défaut</div>
<svg style="position:absolute;left:1863px;top:772px" width="21" height="16"><rect x="0" y="0" width="21" height="16" rx="2.6" fill="#1c84c6"/><path d="M6.6 2 V12.5 H20" stroke="#fff" stroke-width="1.2" fill="none"/><path d="M8.2 10.6 L11.7 6.8 L13.3 8.7 L17.6 4.6" stroke="#fff" stroke-width="1.9" fill="none"/><path d="M15.1 3.2 L19.1 2.9 L19.0 6.9 Z" fill="#fff"/></svg>
<div class="row" style="top:796px;height:1px;background:#f7f8f8"></div>
<div class="row" style="top:797px;height:31px;background:#2d3e50;border-top:1px solid #1f3045;border-bottom:1px solid #1f3045"></div>
<svg style="position:absolute;left:236px;top:812px" width="9" height="6"><path d="M0.8 4.6 L7.7 4.6 L4.25 0.4 Z" fill="#fff"/></svg>
<svg style="position:absolute;left:246px;top:808px" width="11" height="11"><path d="M3.8 0 H6.3 V3.5 H10 V6 H6.3 V9.5 H3.8 V6 H0 V3.5 H3.8 Z" fill="#fff"/></svg>
<div class="t" style="left:381px;top:808px;font-size:11px;color:#fff;font-weight:normal;letter-spacing:-0.556060606060604px;">RECETTES D’ORDRE EN FONCTIONNEMENT</div>
<div class="t" style="right:1112px;top:808px;font-size:11px;color:#fff;font-weight:bold;text-align:right;">56 886</div>
<svg class="abs" style="left:0;top:0;pointer-events:none" width="1892" height="827">
<ellipse cx="299.5" cy="92.3" rx="61.5" ry="42.5" stroke="#22aa44" stroke-width="4.2" fill="none"/>
<ellipse cx="1140.3" cy="349.8" rx="67.8" ry="68.6" stroke="#e8141e" stroke-width="4.8" fill="none"/>
</svg>
</body></html>
